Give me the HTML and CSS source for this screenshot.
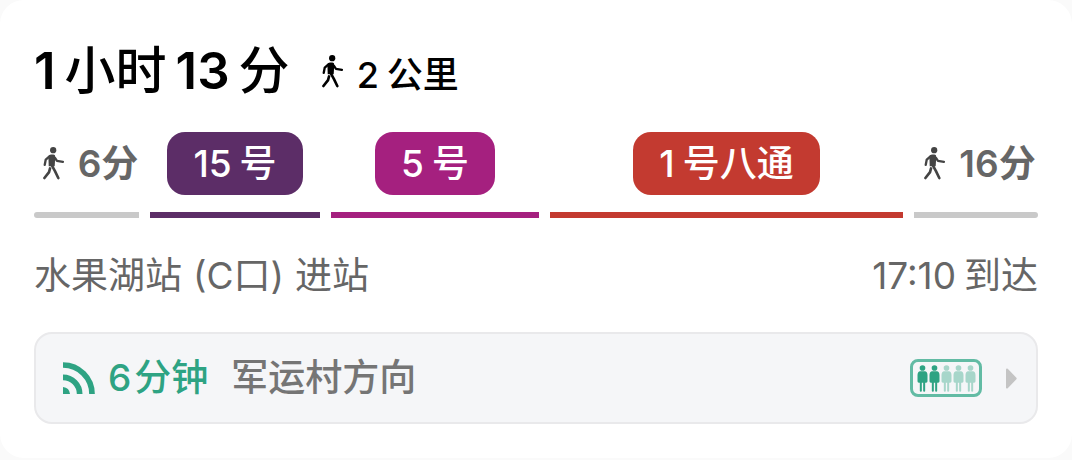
FILE: index.html
```html
<!DOCTYPE html>
<html lang="zh-CN">
<head>
<meta charset="utf-8">
<meta name="viewport" content="width=device-width, initial-scale=1">
<title>路线方案</title>
<link rel="stylesheet" href="styles.css">
</head>
<body>
<svg class="defs" aria-hidden="true">
  <symbol id="walk" viewBox="66 42 63 100">
    <circle cx="96.500" cy="51.500" r="9.500" fill="currentColor"/>
    <path d="M82 71q2-6 8-6h7q6 0 6 7l-2 28H83z" fill="currentColor"/>
    <path d="M86 70L74 80 71 96M102 75l6 9 18 3" fill="none" stroke="currentColor" stroke-width="7" stroke-linecap="round" stroke-linejoin="round"/>
    <path d="M87 107l-3 11-14 18M92 97l10 18 10 21" fill="none" stroke="currentColor" stroke-width="8" stroke-linecap="round" stroke-linejoin="round"/>
  </symbol>
  <symbol id="person" viewBox="0 0 32 81">
    <circle cx="16" cy="9" r="8.500"/>
    <path d="M8 19h16q7 2 7 12v18q0 4-4 4h-3v25q0 2-3 2t-3-2V53h-4v25q0 2-3 2t-3-2V53H5q-4 0-4-4V31Q1 21 8 19z"/>
  </symbol>
</svg>
<main class="card">
  <header class="summary">
    <h1 class="duration"><span>1</span><span class="unit">小时</span><span>13</span><span class="unit">分</span></h1>
    <p class="distance"><svg class="walk" aria-hidden="true"><use href="#walk"/></svg><span>2</span><span>公里</span></p>
  </header>
  <ol class="route">
    <li class="leg leg-walk"><div class="foot"><svg class="walk" aria-hidden="true"><use href="#walk"/></svg><span>6分</span></div></li>
    <li class="leg leg-15"><div class="line"><span>15</span><span>号</span></div></li>
    <li class="leg leg-5"><div class="line"><span>5</span><span>号</span></div></li>
    <li class="leg leg-1"><div class="line"><span>1</span><span>号八通</span></div></li>
    <li class="leg leg-walk"><div class="foot"><svg class="walk" aria-hidden="true"><use href="#walk"/></svg><span>16分</span></div></li>
  </ol>
  <div class="station">
    <span class="entry"><span>水果湖站</span><span>(C口)</span><span>进站</span></span>
    <span class="arrival"><span>17:10</span><span>到达</span></span>
  </div>
  <button class="live" type="button">
    <svg class="signal" viewBox="0 0 96 96" aria-hidden="true">
      <path d="M0 9A87 87 0 0 1 87 96M0 46A50 50 0 0 1 50 96" fill="none" stroke="currentColor" stroke-width="17"/>
      <path d="M0 75Q19 77 21 96H0z" fill="currentColor"/>
    </svg>
    <span class="wait"><span>6</span><span>分钟</span></span>
    <span class="direction">军运村方向</span>
    <span class="crowd" role="img" aria-label="拥挤度 2/5">
      <svg class="person full"><use href="#person"/></svg>
      <svg class="person full"><use href="#person"/></svg>
      <svg class="person"><use href="#person"/></svg>
      <svg class="person"><use href="#person"/></svg>
      <svg class="person"><use href="#person"/></svg>
    </span>
    <svg class="arrow" viewBox="0 0 33 62" aria-hidden="true"><path d="M3 4L29 31 3 58z" fill="currentColor" stroke="currentColor" stroke-width="6" stroke-linejoin="round"/></svg>
  </button>
</main>
</body>
</html>
```
FILE: styles.css
```css
* {
  box-sizing: border-box;
}

body {
  margin: 0;
  background: #fafafa;
  color: #000;
  font-family: Inter, "Noto Sans CJK SC", sans-serif;
  font-size: 37px;
  line-height: 48px;
  white-space: nowrap;
}

.defs {
  display: none;
}

.card {
  padding: 39px 34px 34px;
  border-radius: 24px;
  background: #fff;
}

.summary {
  display: flex;
  align-items: center;
  gap: 32px;
}

.duration {
  display: flex;
  gap: 9px;
  margin: 0;
  font-size: 51px;
  font-weight: 600;
  line-height: 64px;
}

.unit {
  font-weight: 500;
}

.distance {
  display: flex;
  align-items: center;
  gap: 8px;
  margin: 8px 0 0;
  font-size: 36px;
  font-weight: 500;
}

.walk {
  width: 21px;
  height: 33px;
  flex: none;
}

.distance .walk {
  margin: 0 6px 8px 0;
}

.route {
  display: grid;
  grid-template-columns: 105fr 170fr 208fr 353fr 124fr;
  gap: 11px;
  margin: 29px 0 0;
  padding: 0;
  list-style: none;
}

.leg {
  display: flex;
  justify-content: center;
  min-width: 0;
  padding-bottom: 17px;
  border-bottom: 6px solid var(--line);
}

.leg-walk {
  --line: #c9c9c9;
  position: relative;
  border-bottom: 0;
  padding-bottom: 23px;
}

.leg-walk::after {
  content: "";
  position: absolute;
  inset: auto 0 0;
  height: 6px;
  background: var(--line);
  border-radius: 3px 0 0 3px;
}

.leg-walk:last-child::after {
  border-radius: 0 3px 3px 0;
}

.leg-15 {
  --line: #5c2d67;
}

.leg-5 {
  --line: #a5207f;
}

.leg-1 {
  --line: #c33a30;
}

.foot {
  display: flex;
  align-items: center;
  gap: 14px;
  padding-left: 8px;
  color: #666;
  font-weight: 600;
}

.foot .walk {
  color: #444;
}

.line {
  display: flex;
  align-items: center;
  gap: 8px;
  height: 63px;
  padding: 0 26px;
  border-radius: 18px;
  background: var(--line);
  color: #fff;
  font-weight: 500;
}

.station {
  display: flex;
  justify-content: space-between;
  margin-top: 34px;
  color: #666;
}

.entry {
  display: flex;
  gap: 11px;
}

.arrival {
  display: flex;
  gap: 8px;
}

.live {
  display: flex;
  align-items: center;
  width: 100%;
  margin-top: 32px;
  padding: 20px 19px 20px 27px;
  border: 2px solid #e9e9eb;
  border-radius: 18px;
  background: #f5f6f8;
  color: #757575;
  font: inherit;
  font-weight: 500;
}

.signal {
  width: 32px;
  height: 32px;
  color: #2ea383;
}

.wait {
  display: flex;
  gap: 3px;
  margin: 0 23px 0 13px;
  color: #2ea383;
}

.crowd {
  display: flex;
  gap: 1px;
  align-items: center;
  justify-content: center;
  width: 72px;
  height: 38px;
  margin-left: auto;
  border: 3px solid #62bba4;
  border-radius: 8px;
}

.person {
  width: 11px;
  height: 27px;
  fill: #a7d6ca;
}

.full {
  fill: #2ea383;
}

.arrow {
  width: 11px;
  height: 21px;
  margin-left: 24px;
  color: #c4c4c4;
}
```
